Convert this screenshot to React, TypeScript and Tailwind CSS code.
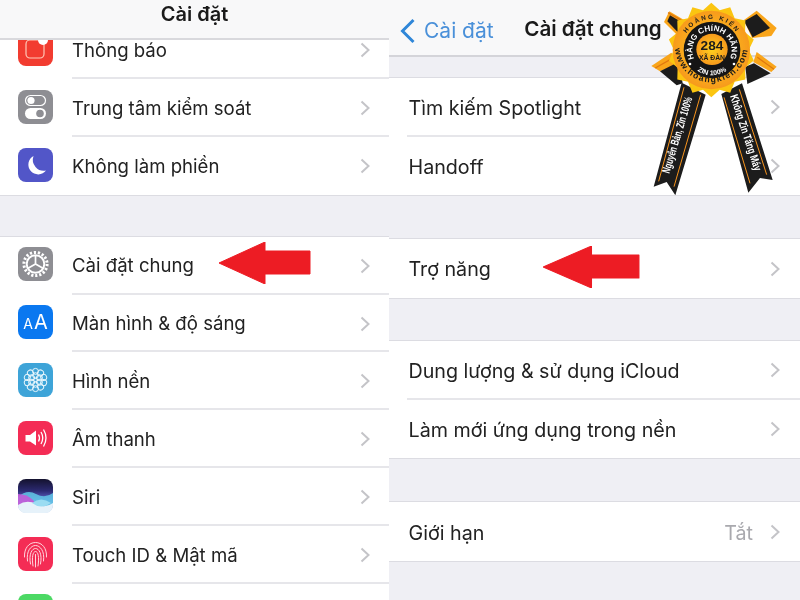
import type { ReactNode } from "react"

const font = "font-['Inter','Liberation_Sans',sans-serif]"

const Chevron = () => (
  <svg width="10" height="16" viewBox="0 0 10 16" className="shrink-0">
    <path d="M1.5 1.5 L8.5 8 L1.5 14.5" fill="none" stroke="#c4c4c8" strokeWidth="2" />
  </svg>
)

const Box = ({ bg, children }: { bg: string; children?: ReactNode }) => (
  <div className={`w-[35px] h-[34px] mb-[3px] rounded-[8px] shrink-0 overflow-hidden flex items-center justify-center ${bg}`}>
    {children}
  </div>
)

// icons
const NotifyIcon = () => (
  <Box bg="bg-[#f23c30]">
    <svg width="35" height="34" viewBox="0 0 35 34">
      <rect x="8" y="8" width="18" height="18" rx="4" fill="none" stroke="#ffc9b8" strokeWidth="1.2" />
      <circle cx="25" cy="8" r="5" fill="#fff" />
    </svg>
  </Box>
)

const ControlIcon = () => (
  <Box bg="bg-[#8e8e93]">
    <svg width="35" height="34" viewBox="0 0 35 34">
      <rect x="7.5" y="5.5" width="20" height="10" rx="5" fill="none" stroke="#fff" strokeWidth="1.2" />
      <circle cx="13" cy="10.5" r="3.6" fill="#fff" />
      <rect x="7" y="18" width="21" height="11" rx="5.5" fill="#fff" />
      <circle cx="22" cy="23.5" r="3.8" fill="#8e8e93" />
    </svg>
  </Box>
)

const MoonIcon = () => (
  <Box bg="bg-[#5256c8]">
    <svg width="35" height="34" viewBox="0 0 35 34">
      <path d="M15.5 8 A9.8 9.8 0 1 0 28 22.5 A11 11 0 0 1 15.5 8 Z" fill="#fff" />
    </svg>
  </Box>
)

const GearIcon = () => (
  <Box bg="bg-[#8e8e93]">
    <svg width="35" height="34" viewBox="0 0 35 34" fill="none" stroke="#fff">
      <circle cx="17.5" cy="17" r="11.6" strokeWidth="3" strokeDasharray="2.2 1.85" />
      <circle cx="17.5" cy="17" r="8.8" strokeWidth="2" />
      <path d="M17.5 17 L17.5 8.5 M17.5 17 L10 21.3 M17.5 17 L25 21.3" strokeWidth="1.7" />
    </svg>
  </Box>
)

const TextIcon = () => (
  <Box bg="bg-[#0a78f0]">
    <span className={`${font} text-white font-normal leading-none flex items-baseline gap-[1px]`}>
      <span className="text-[14px]">A</span>
      <span className="text-[20px]">A</span>
    </span>
  </Box>
)

const FlowerIcon = () => (
  <Box bg="bg-[#3ea4d8]">
    <svg width="35" height="34" viewBox="0 0 35 34" fill="none" stroke="#e8f6fc" strokeWidth="1">
      <circle cx="17.5" cy="17" r="2" />
      {[0, 60, 120, 180, 240, 300].map((a) => (
        <circle key={a} cx="17.5" cy="12.5" r="2.8" transform={`rotate(${a} 17.5 17)`} />
      ))}
      {[0, 36, 72, 108, 144, 180, 216, 252, 288, 324].map((a) => (
        <circle key={a} cx="17.5" cy="8.4" r="3" transform={`rotate(${a} 17.5 17)`} />
      ))}
    </svg>
  </Box>
)

const SoundIcon = () => (
  <Box bg="bg-[#f42c55]">
    <svg width="35" height="34" viewBox="0 0 35 34">
      <path d="M7.5 14 H12 L18 9.5 V24.5 L12 20.5 H7.5 Z" fill="#fff" />
      <path d="M20.5 13.5 Q22.5 17 20.5 20.5 M23 11 Q26.5 17 23 23 M25.5 8.5 Q30.5 17 25.5 25.5" fill="none" stroke="#fff" strokeWidth="1.3" />
    </svg>
  </Box>
)

const SiriIcon = () => (
  <Box bg="bg-white">
    <svg width="35" height="34" viewBox="0 0 35 34">
      <defs>
        <linearGradient id="siriSky" x1="0" y1="0" x2="0" y2="1">
          <stop offset="0" stopColor="#14122e" />
          <stop offset="0.35" stopColor="#2c2a72" />
          <stop offset="0.6" stopColor="#5d62c8" />
          <stop offset="1" stopColor="#dce8f6" />
        </linearGradient>
      </defs>
      <rect width="35" height="34" fill="url(#siriSky)" />
      <path d="M0 18 Q9 10 18 15 T35 14 V26 Q26 30 18 24 T0 26 Z" fill="#62c8e8" opacity="0.85" />
      <path d="M0 15 Q9 15 15 21 T0 27 Z" fill="#c45ad8" opacity="0.9" />
      <path d="M0 26 Q9 20 18 25 T35 24 V34 H0 Z" fill="#e6f2fa" />
      <path d="M14 24 Q23 17 33 24 Q23 31 14 24 Z" fill="#9adcf2" />
    </svg>
  </Box>
)

const TouchIcon = () => (
  <Box bg="bg-[#f42c55]">
    <svg width="35" height="34" viewBox="0 0 35 34" fill="none" stroke="#ffd6de" strokeWidth="1" strokeLinecap="round">
      <path d="M6.5 20 C6 11 11 5.5 17.5 5.5 C24 5.5 29 11 28.5 20" />
      <path d="M9.5 24 C8 14 13 8.5 17.5 8.5 C22 8.5 27 14 25.5 24" />
      <path d="M12.5 27 C10.5 17 14 11.5 17.5 11.5 C21 11.5 24.5 17 22.5 27" />
      <path d="M15 29 C13.5 20 15 14.5 17.5 14.5 C20 14.5 21.5 20 20 29" />
      <path d="M17.5 17.5 L17.5 30" />
    </svg>
  </Box>
)

const Row = ({ icon, label, last, value }: { icon?: ReactNode; label?: string; last?: boolean; value?: string }) => (
  <div className={`relative flex items-center bg-white ${icon ? "h-[57.9px] pl-[18px] pr-[19px] text-[18.6px]" : "h-[58.7px] pl-[19.5px] pr-[20px] text-[19.7px]"}`}>
    {icon}
    <span className={`flex-1 text-[#222] ${icon ? "ml-[19px] mt-[1px]" : "mt-[3px]"}`}>{label}</span>
    {value && <span className="text-[#a9a9ae] mt-[3px] mr-[17px]">{value}</span>}
    <Chevron />
    {!last && <div className={`absolute bottom-0 right-0 h-[2px] bg-[#e6e6ea] ${icon ? "left-[72px]" : "left-[18px]"}`} />}
  </div>
)

const Group = ({ children, className = "" }: { children: ReactNode; className?: string }) => (
  <div className={`border-y border-[#dcdce2] ${className}`}>{children}</div>
)

const Arrow = ({ className }: { className: string }) => (
  <svg viewBox="0 0 92 42" preserveAspectRatio="none" className={`absolute h-[42px] ${className}`}>
    <path d="M0 21 L46 0 L46 9 L91 9 L91 32 L46 32 L46 42 Z" fill="#ed1c24" stroke="#ed1c24" strokeLinejoin="round" />
  </svg>
)

// sticker sits over the nav bar, coordinates follow a 3x crop
const Badge = () => {
  const rays = Array.from({ length: 28 }, (_, i) => {
    const a = (i * Math.PI) / 14
    const r = i % 2 === 0 ? 142 : 122
    return `${214 + r * 0.92 * Math.sin(a)},${150 - r * Math.cos(a)}`
  }).join(" ")
  return (
    <svg width="160" height="200" viewBox="0 0 480 600" className="absolute left-[640px] top-0">
      <defs>
        <radialGradient id="sealGold" cx="0.5" cy="0.5" r="0.5">
          <stop offset="0" stopColor="#ffd21e" />
          <stop offset="1" stopColor="#f79a1c" />
        </radialGradient>
        <path id="whiteTop" d="M163 177 A59 59 0 1 1 269 177" />
        <path id="goldTop" d="M125 150 A90 93 0 0 1 305 150" />
        <path id="goldBottom" d="M104 135 A110 112 0 1 0 324 135" />
        <path id="whiteBottom" d="M140 150 A76 76 0 0 0 292 150" />
      </defs>

      {/* bow */}
      <path d="M72 66 L88 34 L146 68 L118 112 Z" fill="#f9a51a" />
      <path d="M90 46 L140 76 L122 106 L82 64 Z" fill="#1c1c1c" />
      <path d="M84 38 L130 64" stroke="#e0780f" strokeWidth="4" />
      <path d="M312 60 L350 32 L410 84 L394 108 L336 114 Z" fill="#f9a51a" />
      <path d="M312 64 L350 42 L390 84 L338 112 Z" fill="#1c1c1c" />
      <path d="M34 198 L94 158 L124 190 L60 214 Z" fill="#f9a51a" />
      <path d="M60 214 L116 186 L128 250 L110 256 Z" fill="#1c1c1c" />
      <path d="M46 204 L106 170" stroke="#e0780f" strokeWidth="4" />
      <path d="M350 156 L410 200 L394 216 L340 186 Z" fill="#f9a51a" />
      <path d="M342 190 L392 220 L322 252 L316 200 Z" fill="#1c1c1c" />
      <path d="M352 172 L402 208" stroke="#e0780f" strokeWidth="4" />

      {/* ribbons */}
      <path d="M125 248 L197 284 L106 586 L80 546 L41 560 Z" fill="#1c1c1c" />
      <path d="M132 262 L56 544 M182 284 L102 560" stroke="#f7941d" strokeWidth="3" />
      <path d="M244 282 L306 250 L398 540 L360 534 L325 578 Z" fill="#1c1c1c" />
      <path d="M252 292 L330 550 M298 268 L380 524" stroke="#f7941d" strokeWidth="3" />
      <text transform="translate(88 522) rotate(-73)" fontFamily="Liberation Sans, sans-serif" fontSize="34" fontWeight="700" fill="#fff" textLength="238" lengthAdjust="spacingAndGlyphs">Nguyên Bản, Zin 100%</text>
      <text transform="translate(270 288) rotate(72)" fontFamily="Liberation Sans, sans-serif" fontSize="34" fontWeight="700" fill="#fff" textLength="238" lengthAdjust="spacingAndGlyphs">Không Zin Tăng Máy</text>

      {/* seal */}
      <polygon points={rays} fill="#fbc511" />
      <ellipse cx="214" cy="150" rx="116" ry="118" fill="url(#sealGold)" />
      <circle cx="216" cy="150" r="85" fill="#151515" />
      <circle cx="216" cy="148" r="47" fill="url(#sealGold)" />
      <text fontFamily="Liberation Sans, sans-serif" fontSize="19" fontWeight="700" fill="#1c1c1c" letterSpacing="6">
        <textPath href="#goldTop" startOffset="50%" textAnchor="middle">HOÀNG KIẾN</textPath>
      </text>
      <text fontFamily="Liberation Sans, sans-serif" fontSize="26" fontWeight="700" fill="#1c1c1c" letterSpacing="4">
        <textPath href="#goldBottom" startOffset="50%" textAnchor="middle">www.hoangkien.com</textPath>
      </text>
      <text fontFamily="Liberation Sans, sans-serif" fontSize="24" fontWeight="700" fill="#fff" letterSpacing="0.3">
        <textPath href="#whiteTop" startOffset="50%" textAnchor="middle">HÀNG CHÍNH HÃNG</textPath>
      </text>
      <text fontFamily="Liberation Sans, sans-serif" fontSize="21" fontWeight="700" fill="#fff">
        <textPath href="#whiteBottom" startOffset="50%" textAnchor="middle">ZIN 100%</textPath>
      </text>
      <circle cx="150" cy="192" r="4" fill="#fff" />
      <circle cx="282" cy="192" r="4" fill="#fff" />
      <text x="216" y="150" textAnchor="middle" fontFamily="Liberation Sans, sans-serif" fontSize="41" fontWeight="700" fill="#1c1c1c">284</text>
      <text x="216" y="181" textAnchor="middle" fontFamily="Liberation Sans, sans-serif" fontSize="20" fontWeight="700" fill="#1c1c1c" textLength="78" lengthAdjust="spacingAndGlyphs">XÃ ĐÀN</text>
    </svg>
  )
}

const App = () => {
  return (
    <div className={`relative w-[800px] h-[600px] overflow-hidden flex bg-[#efeff4] blur-[0.4px] ${font}`}>
      {/* settings list */}
      <div className="w-[389px] shrink-0">
        <div className="relative z-10 h-[40px] pb-[10px] bg-[#f8f8f9] border-b-2 border-[#d9d9dd] flex items-center justify-center text-[20px] font-semibold text-[#1a1a1a]">
          Cài đặt
        </div>
        <div className="-mt-[18.5px]">
          <Group className="border-t-0">
            <Row icon={<NotifyIcon />} label="Thông báo" />
            <Row icon={<ControlIcon />} label="Trung tâm kiểm soát" />
            <Row icon={<MoonIcon />} label="Không làm phiền" last />
          </Group>
        </div>
        <Group className="mt-[39.5px]">
          <Row icon={<GearIcon />} label="Cài đặt chung" />
          <Row icon={<TextIcon />} label="Màn hình & độ sáng" />
          <Row icon={<FlowerIcon />} label="Hình nền" />
          <Row icon={<SoundIcon />} label="Âm thanh" />
          <Row icon={<SiriIcon />} label="Siri" />
          <Row icon={<TouchIcon />} label="Touch ID & Mật mã" />
          <Row icon={<Box bg="bg-[#4cd964]" />} label="" />
        </Group>
      </div>

      {/* general settings */}
      <div className="flex-1 min-w-0">
        <div className="relative h-[57px] pt-[3px] bg-[#f8f8f9] border-b-2 border-[#d4d4d9] flex items-center justify-center text-[20.6px] font-semibold text-[#1a1a1a]">
          <div className="absolute left-[10px] top-[15px] flex items-center gap-[8px] font-normal text-[21px] text-[#4a90d9]">
            <svg width="17" height="26" viewBox="0 0 17 26">
              <path d="M14.5 2 L3.5 13 L14.5 24" fill="none" stroke="#2f86d8" strokeWidth="3" />
            </svg>
            Cài đặt
          </div>
          <span className="ml-[-3px]">Cài đặt chung</span>
        </div>
        <Group className="mt-[20px]">
          <Row label="Tìm kiếm Spotlight" />
          <Row label="Handoff" last />
        </Group>
        <Group className="mt-[42px]">
          <Row label="Trợ năng" last />
        </Group>
        <Group className="mt-[41px]">
          <Row label="Dung lượng & sử dụng iCloud" />
          <Row label="Làm mới ứng dụng trong nền" last />
        </Group>
        <Group className="mt-[42px]">
          <Row label="Giới hạn" value="Tắt" last />
        </Group>
      </div>

      <Arrow className="left-[219px] top-[242px] w-[92px]" />
      <Arrow className="left-[543px] top-[246px] w-[97px]" />
      <Badge />
    </div>
  )
}

export default App
